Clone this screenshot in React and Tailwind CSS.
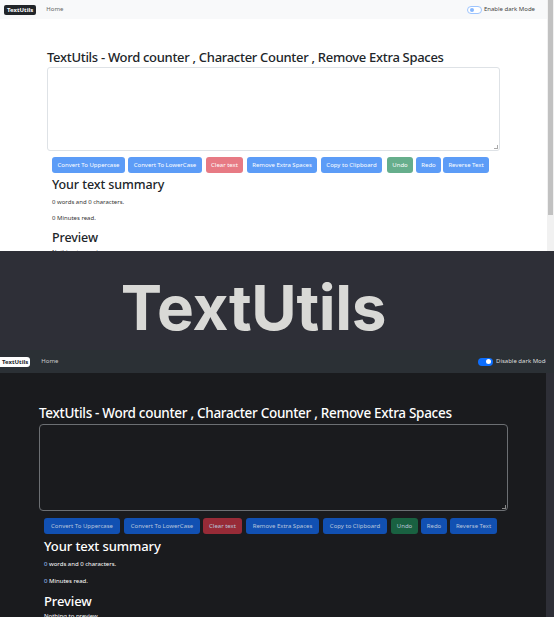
const buttonsLight = [
  { label: "Convert To Uppercase", w: "w-[73px]", ml: "ml-0", color: "bg-[#5c9cf7]" },
  { label: "Convert To LowerCase", w: "w-[74px]", ml: "ml-[3px]", color: "bg-[#5c9cf7]" },
  { label: "Clear text", w: "w-[37px]", ml: "ml-[4px]", color: "bg-[#e77a84]" },
  { label: "Remove Extra Spaces", w: "w-[70px]", ml: "ml-[4px]", color: "bg-[#5c9cf7]" },
  { label: "Copy to Clipboard", w: "w-[61px]", ml: "ml-[4px]", color: "bg-[#5c9cf7]" },
  { label: "Undo", w: "w-[26px]", ml: "ml-[5px]", color: "bg-[#66ae8c]" },
  { label: "Redo", w: "w-[25px]", ml: "ml-[3px]", color: "bg-[#5c9cf7]" },
  { label: "Reverse Text", w: "w-[46px]", ml: "ml-[2px]", color: "bg-[#5c9cf7]" },
];

const buttonsDark = [
  { label: "Convert To Uppercase", w: "w-[76px]", ml: "ml-0", color: "bg-[#1150b2]" },
  { label: "Convert To LowerCase", w: "w-[76px]", ml: "ml-[4px]", color: "bg-[#1150b2]" },
  { label: "Clear text", w: "w-[39px]", ml: "ml-[3px]", color: "bg-[#972b37]" },
  { label: "Remove Extra Spaces", w: "w-[73px]", ml: "ml-[4px]", color: "bg-[#1150b2]" },
  { label: "Copy to Clipboard", w: "w-[64px]", ml: "ml-[4px]", color: "bg-[#1150b2]" },
  { label: "Undo", w: "w-[27px]", ml: "ml-[4px]", color: "bg-[#196141]" },
  { label: "Redo", w: "w-[26px]", ml: "ml-[3px]", color: "bg-[#1150b2]" },
  { label: "Reverse Text", w: "w-[47px]", ml: "ml-[3px]", color: "bg-[#1150b2]" },
];

const title = "TextUtils - Word counter , Character Counter , Remove Extra Spaces";

function LightShot() {
  return (
    <div className="flex h-[251px] w-full overflow-hidden bg-white">
      <div className="w-[547px] shrink-0">
        {/* navbar */}
        <div className="flex h-[19px] items-center bg-[#f8f9fa] pl-[4px] pr-[12px]">
          <span className="rounded-[2px] bg-[#212529] px-[3px] py-[1px] text-[6px] font-bold leading-[8px] text-white">
            TextUtils
          </span>
          <span className="ml-[10px] text-[6px] text-[#666]">Home</span>
          <div className="ml-auto flex items-center gap-[2px]">
            <div className="flex h-[8px] w-[15px] items-center rounded-full border border-[#9ec5fe] bg-white pl-[2px]">
              <div className="h-[4px] w-[4px] rounded-full bg-[#86b7fe]" />
            </div>
            <span className="text-[6px] text-[#444]">Enable dark Mode</span>
          </div>
        </div>

        <div className="pl-[47px] pt-[29px]">
          <h1 className="text-[13px] font-medium leading-[18px] tracking-[-0.3px] text-[#212529]">{title}</h1>
          <div className="relative mt-[1px] h-[84px] w-[453px] rounded-[3px] border border-[#dee2e6] bg-white">
            <div className="absolute bottom-[1px] right-[1px] h-[4px] w-[4px] border-b border-r border-[#aaa]" />
          </div>
          <div className="ml-[5px] mt-[6px] flex">
            {buttonsLight.map((b) => (
              <div
                key={b.label}
                className={`${b.w} ${b.ml} ${b.color} flex h-[16px] items-center justify-center rounded-[3px] text-[6px] whitespace-nowrap text-white`}
              >
                {b.label}
              </div>
            ))}
          </div>
          <div className="ml-[5px]">
            <h2 className="mt-[3px] text-[12.5px] font-medium leading-[18px] tracking-[-0.1px] text-[#212529]">Your text summary</h2>
            <p className="mt-[4px] text-[6px] leading-[8px] text-[#333]">0 words and 0 characters.</p>
            <p className="mt-[8px] text-[6px] leading-[8px] text-[#333]">0 Minutes read.</p>
            <h2 className="mt-[7px] text-[12.5px] font-medium leading-[18px] tracking-[-0.1px] text-[#212529]">Preview</h2>
            <p className="mt-[1px] text-[6px] leading-[8px] text-[#333]">Nothing to preview</p>
          </div>
        </div>
      </div>
      {/* scrollbar */}
      <div className="flex w-[7px] flex-col bg-[#f1f1f1] px-[1px]">
        <div className="h-[215px] w-full bg-[#c1c1c1]" />
      </div>
    </div>
  );
}

function Banner() {
  return (
    <div className="flex h-[99px] items-center justify-center bg-[#2e2f37] pr-[47px] pt-[14px]">
      <span className="font-['Inter',sans-serif] text-[62px] font-bold leading-none tracking-[-0.3px] text-[#d9d9d6]">
        TextUtils
      </span>
    </div>
  );
}

function DarkShot() {
  return (
    <div className="flex h-[267px] w-full overflow-hidden">
      <div className="w-[546px] shrink-0 overflow-hidden bg-[#1a1b1e]">
        {/* navbar */}
        <div className="flex h-[23px] items-center bg-[#2b3035] pl-0">
          <span className="rounded-r-[3px] bg-white px-[2px] py-[1px] text-[6px] font-bold leading-[8px] text-[#212529]">
            TextUtils
          </span>
          <span className="ml-[11px] text-[6px] text-[#ccc]">Home</span>
          <div className="ml-auto flex items-center gap-[3px]">
            <div className="flex h-[8px] w-[15px] items-center justify-end rounded-full bg-[#0d6efd] pr-[2px]">
              <div className="h-[5px] w-[5px] rounded-full bg-white" />
            </div>
            <span className="w-[50px] overflow-hidden text-[6px] whitespace-nowrap text-[#ddd]">Disable dark Mode</span>
          </div>
        </div>

        <div className="pl-[39px] pt-[31px]">
          <h1 className="text-[13.5px] font-medium leading-[19px] tracking-[-0.3px] text-white">{title}</h1>
          <div className="relative mt-[1px] h-[87px] w-[469px] rounded-[4px] border border-[#6c6f73] bg-[#1a1b1e]">
            <div className="absolute bottom-[1px] right-[1px] h-[4px] w-[4px] border-b border-r border-[#888]" />
          </div>
          <div className="ml-[5px] mt-[7px] flex">
            {buttonsDark.map((b) => (
              <div
                key={b.label}
                className={`${b.w} ${b.ml} ${b.color} flex h-[16px] items-center justify-center rounded-[3px] text-[6px] whitespace-nowrap text-[#b9c6dc]`}
              >
                {b.label}
              </div>
            ))}
          </div>
          <div className="ml-[5px]">
            <h2 className="mt-[3px] text-[13px] font-medium leading-[19px] tracking-[-0.1px] text-white">Your text summary</h2>
            <p className="mt-[4px] text-[6px] leading-[8px] text-white">
              <span className="text-[#9ec5fe]">0</span> words and 0 characters.
            </p>
            <p className="mt-[9px] text-[6px] leading-[8px] text-white">
              <span className="text-[#9ec5fe]">0</span> Minutes read.
            </p>
            <h2 className="mt-[7px] text-[13px] font-medium leading-[19px] tracking-[-0.1px] text-white">Preview</h2>
            <p className="mt-[1px] text-[6px] leading-[8px] text-white">Nothing to preview</p>
          </div>
        </div>
      </div>
      <div className="flex w-[8px] flex-col">
        <div className="h-[23px] bg-[#2b3035]" />
        <div className="flex-1 bg-[#2e2f37]" />
      </div>
    </div>
  );
}

export default function App() {
  return (
    <div className="h-[617px] w-[554px] overflow-hidden font-['Noto_Sans',sans-serif]">
      <LightShot />
      <Banner />
      <DarkShot />
    </div>
  );
}
